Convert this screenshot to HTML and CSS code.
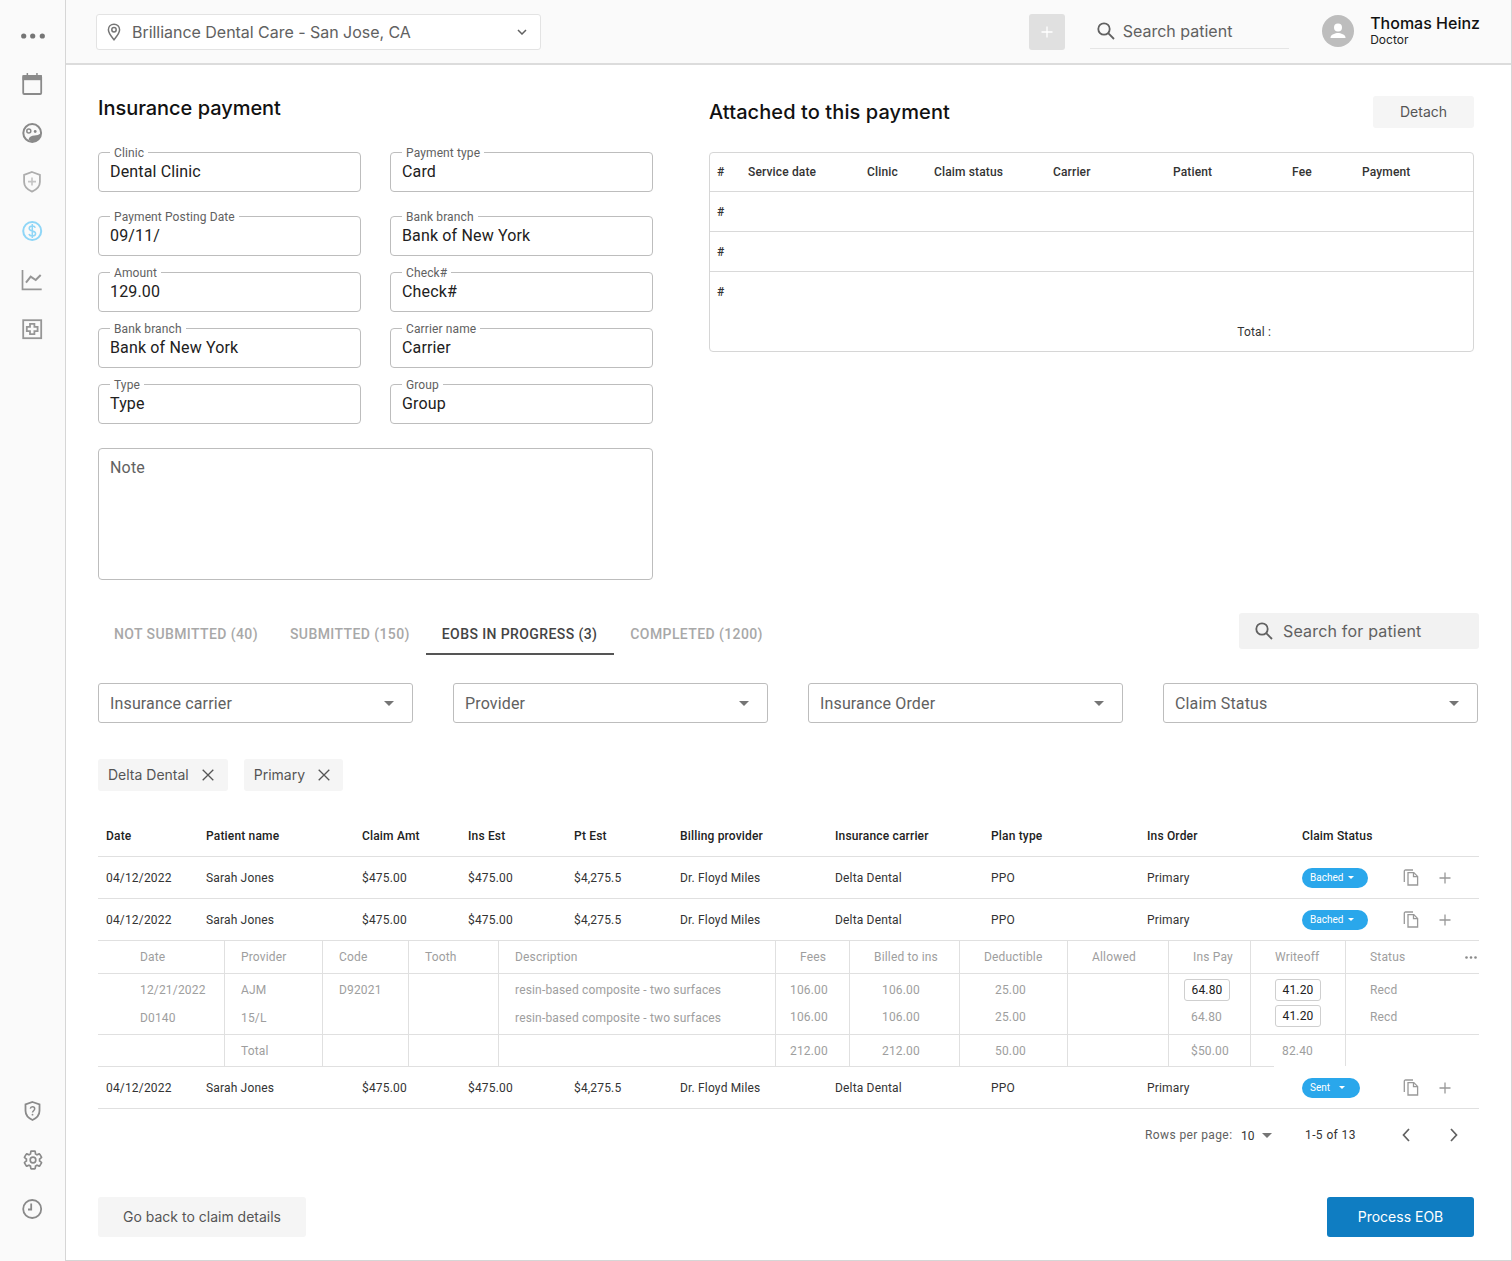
FILE: index.html
```html
<!DOCTYPE html>
<html lang="en">
<head>
<meta charset="utf-8">
<title>Insurance payment</title>
<link rel="stylesheet" href="styles.css">
</head>
<body>
<svg class="defs" width="0" height="0" aria-hidden="true">
  <symbol id="copy" viewBox="0 0 16 17"><path d="M10 1H2.500A1.200 1.200 0 0 0 1.300 2.200V13" fill="none" stroke="currentColor" stroke-width="1.300"/><path d="M5 3.600h5.800L14.600 7.400V16H5z" fill="none" stroke="currentColor" stroke-width="1.300"/><path d="M10.500 3.800V7.600h4" fill="none" stroke="currentColor" stroke-width="1.300"/></symbol>
  <symbol id="plus" viewBox="0 0 12 12"><path d="M6 .5v11M.5 6h11" stroke="currentColor" stroke-width="1.300" fill="none"/></symbol>
  <symbol id="caret" viewBox="0 0 10 5"><path d="M0 0h10L5 5z" fill="currentColor"/></symbol>
  <symbol id="search" viewBox="0 0 20 20"><circle cx="8" cy="8" r="5.700" fill="none" stroke="currentColor" stroke-width="1.800"/><path d="M12.200 12.200l5.800 5.800" stroke="currentColor" stroke-width="1.800" fill="none"/></symbol>
  <symbol id="close" viewBox="0 0 12 12"><path d="M.7.700l10.600 10.600M11.300.700L.7 11.300" stroke="currentColor" stroke-width="1.300" fill="none"/></symbol>
</svg>
<div class="app">
  <aside class="sidebar">
    <div class="side-group">
      <svg class="side-icon" viewBox="0 0 24 24"><circle cx="3.700" cy="13" r="2.600" fill="#757575"/><circle cx="12.700" cy="13" r="2.600" fill="#757575"/><circle cx="22.300" cy="13" r="2.600" fill="#757575"/></svg>
      <svg class="side-icon" viewBox="0 0 24 24"><rect x="3.200" y="4" width="18" height="18" rx="1" fill="none" stroke="#8a8a8a" stroke-width="1.800"/><path d="M2.500 3.200h19.500V8.200H2.500z" fill="#8a8a8a"/><path d="M6.600 1h1.500v3H6.600zM16.200 1h1.500v3h-1.500z" fill="#8a8a8a"/></svg>
      <svg class="side-icon" viewBox="0 0 24 24"><circle cx="12.200" cy="12" r="8.900" fill="none" stroke="#8a8a8a" stroke-width="2"/><circle cx="8.800" cy="10" r="2" fill="none" stroke="#8a8a8a" stroke-width="1.500"/><circle cx="15.200" cy="10.500" r="1.400" fill="#8a8a8a"/><path d="M8.500 18.500c1-3 3-4 6-4 2.500 0 4.500-.8 6-2 0 5-4 8-7 8-2 0-4-.7-5-2z" fill="#8a8a8a"/></svg>
      <svg class="side-icon" viewBox="0 0 24 24"><path d="M12 2l7.900 2.900v7c0 4.300-3.300 7.600-7.900 9.700-4.600-2.100-7.900-5.400-7.900-9.700v-7z" fill="none" stroke="#adadad" stroke-width="1.800"/><path d="M12 7.600v8M8 11.600h8" stroke="#c4c4c4" stroke-width="1.600" fill="none"/></svg>
      <svg class="side-icon" viewBox="0 0 24 24"><circle cx="12.200" cy="12" r="9" fill="none" stroke="#8fd6f7" stroke-width="2"/><path d="M15.300 8.800c-.4-1.200-1.600-1.800-3-1.800-1.700 0-3.100.9-3.100 2.400 0 3.400 6.400 1.800 6.400 5.100 0 1.600-1.500 2.500-3.300 2.500-1.600 0-2.900-.7-3.300-2M12.300 5v14" fill="none" stroke="#8fd6f7" stroke-width="1.500"/></svg>
      <svg class="side-icon" viewBox="0 0 24 24"><path d="M2.500 2v19.300h19.200" fill="none" stroke="#969696" stroke-width="1.700"/><path d="M6 14.700l4.700-6 5 3.300 5-5" fill="none" stroke="#969696" stroke-width="2"/></svg>
      <svg class="side-icon" viewBox="0 0 24 24"><rect x="3.200" y="3.200" width="18" height="18" fill="none" stroke="#969696" stroke-width="1.800"/><path d="M10 6.800h4.400v3h3.200v4.400h-3.200v3H10v-3H6.800V9.800H10z" fill="none" stroke="#969696" stroke-width="1.800"/></svg>
    </div>
    <div class="side-group">
      <svg class="side-icon" viewBox="0 0 24 24"><path d="M12.500 3l7 2.300v6.500c0 4.200-2.900 7.300-7 9.200-4.100-1.900-7-5-7-9.200V5.300z" fill="none" stroke="#8a8a8a" stroke-width="1.800"/><path d="M10.300 9.700c.2-1.200 1.100-1.900 2.200-1.900 1.200 0 2.200.8 2.200 2 0 1.900-2.200 1.900-2.200 3.700" fill="none" stroke="#8a8a8a" stroke-width="1.500"/><circle cx="12.500" cy="15.700" r=".9" fill="#8a8a8a"/></svg>
      <svg class="side-icon" viewBox="0 0 24 24"><g transform="translate(13 12) scale(.88) translate(-12 -12)"><path d="M19.430 12.980c.04-.32.07-.64.07-.98s-.03-.66-.07-.98l2.110-1.650c.19-.15.24-.42.12-.64l-2-3.460c-.12-.22-.39-.3-.61-.22l-2.490 1c-.52-.4-1.080-.73-1.690-.98l-.38-2.650C14.460 2.180 14.250 2 14 2h-4c-.25 0-.46.18-.49.42l-.38 2.650c-.61.25-1.170.59-1.690.98l-2.490-1c-.23-.09-.49 0-.61.22l-2 3.460c-.13.22-.07.49.12.64l2.110 1.650c-.04.32-.07.65-.07.98s.03.66.07.98l-2.110 1.650c-.19.15-.24.42-.12.64l2 3.460c.12.22.39.3.61.22l2.490-1c.52.4 1.080.73 1.690.98l.38 2.650c.03.24.24.42.49.42h4c.25 0 .46-.18.49-.42l.38-2.650c.61-.25 1.170-.59 1.690-.98l2.490 1c.23.09.49 0 .61-.22l2-3.460c.12-.22.07-.49-.12-.64z" fill="none" stroke="#8a8a8a" stroke-width="1.900"/><circle cx="12" cy="12" r="3.200" fill="none" stroke="#8a8a8a" stroke-width="1.900"/></g></svg>
      <svg class="side-icon" viewBox="0 0 24 24"><circle cx="12.200" cy="12" r="9" fill="none" stroke="#8a8a8a" stroke-width="1.800"/><path d="M11.200 6.500v6H8" fill="none" stroke="#8a8a8a" stroke-width="1.800"/></svg>
    </div>
  </aside>
  <div class="main">
    <header class="topbar">
      <div class="location">
        <svg class="loc-icon" viewBox="0 0 16 18"><path d="M8 1.200c-3.200 0-5.600 2.400-5.600 5.500 0 3.600 3.500 7.300 5.600 10 2.100-2.700 5.600-6.400 5.600-10 0-3.100-2.400-5.500-5.600-5.500z" fill="none" stroke="#757575" stroke-width="1.500"/><circle cx="8" cy="6.800" r="2.200" fill="none" stroke="#757575" stroke-width="1.500"/></svg>
        <span class="loc-text">Brilliance Dental Care - San Jose, CA</span>
        <svg class="loc-chevron" viewBox="0 0 10 6"><path d="M1 1l4 4 4-4" fill="none" stroke="#616161" stroke-width="1.500"/></svg>
      </div>
      <div class="add-btn"><svg class="add-plus"><use href="#plus"/></svg></div>
      <div class="top-search"><svg class="top-search-icon"><use href="#search"/></svg><span>Search patient</span></div>
      <div class="user">
        <svg class="avatar" viewBox="0 0 32 32"><circle cx="16" cy="16" r="16" fill="#bdbdbd"/><circle cx="16" cy="12.500" r="4" fill="#fff"/><path d="M8.500 22.500c0-3 5-4.500 7.500-4.500s7.500 1.500 7.500 4.500v.5h-15z" fill="#fff"/></svg>
        <div class="user-text"><div class="user-name">Thomas Heinz</div><div class="user-role">Doctor</div></div>
      </div>
    </header>
    <main class="content">
      <section class="top-section">
        <div>
          <h1 class="title-left">Insurance payment</h1>
          <div class="fields">
            <div class="field first-row"><span class="legend">Clinic</span><span class="value">Dental Clinic</span></div>
            <div class="field first-row"><span class="legend">Payment type</span><span class="value">Card</span></div>
            <div class="field"><span class="legend">Payment Posting Date</span><span class="value">09/11/</span></div>
            <div class="field"><span class="legend">Bank branch</span><span class="value">Bank of New York</span></div>
            <div class="field"><span class="legend">Amount</span><span class="value">129.00</span></div>
            <div class="field"><span class="legend">Check#</span><span class="value">Check#</span></div>
            <div class="field"><span class="legend">Bank branch</span><span class="value">Bank of New York</span></div>
            <div class="field"><span class="legend">Carrier name</span><span class="value">Carrier</span></div>
            <div class="field"><span class="legend">Type</span><span class="value">Type</span></div>
            <div class="field"><span class="legend">Group</span><span class="value">Group</span></div>
          </div>
          <div class="note">Note</div>
        </div>
        <div>
          <div class="attached-head">
            <h2 class="title-right">Attached to this payment</h2>
            <div class="detach">Detach</div>
          </div>
          <div class="attached">
            <div class="at-row at-header"><span>#</span><span>Service date</span><span>Clinic</span><span>Claim status</span><span>Carrier</span><span>Patient</span><span>Fee</span><span>Payment</span></div>
            <div class="at-row"><span>#</span></div>
            <div class="at-row"><span>#</span></div>
            <div class="at-row at-plain"><span>#</span></div>
            <div class="at-total">Total :</div>
          </div>
        </div>
      </section>

      <section class="wide">
        <div class="tabs-row">
          <div class="tabs">
            <div class="tab">NOT SUBMITTED (40)</div>
            <div class="tab">SUBMITTED (150)</div>
            <div class="tab tab-active">EOBS IN PROGRESS (3)</div>
            <div class="tab">COMPLETED (1200)</div>
          </div>
          <div class="tab-search"><svg class="tab-search-icon"><use href="#search"/></svg><span>Search for patient</span></div>
        </div>
        <div class="filters">
          <div class="filter"><span>Insurance carrier</span><svg class="filter-caret"><use href="#caret"/></svg></div>
          <div class="filter"><span>Provider</span><svg class="filter-caret"><use href="#caret"/></svg></div>
          <div class="filter"><span>Insurance Order</span><svg class="filter-caret"><use href="#caret"/></svg></div>
          <div class="filter"><span>Claim Status</span><svg class="filter-caret"><use href="#caret"/></svg></div>
        </div>
        <div class="chips">
          <div class="chip">Delta Dental<svg class="chip-x"><use href="#close"/></svg></div>
          <div class="chip">Primary<svg class="chip-x"><use href="#close"/></svg></div>
        </div>

        <div class="claims">
          <div class="cl-row cl-head"><span>Date</span><span>Patient name</span><span>Claim Amt</span><span>Ins Est</span><span>Pt Est</span><span>Billing provider</span><span>Insurance carrier</span><span>Plan type</span><span>Ins Order</span><span>Claim Status</span></div>
          <div class="cl-row"><span>04/12/2022</span><span>Sarah Jones</span><span>$475.00</span><span>$475.00</span><span>$4,275.5</span><span>Dr. Floyd Miles</span><span>Delta Dental</span><span>PPO</span><span>Primary</span><div class="cl-actions"><div class="status-slot"><span class="status">Bached<svg class="status-caret"><use href="#caret"/></svg></span></div><svg class="copy-icon"><use href="#copy"/></svg><svg class="plus-icon"><use href="#plus"/></svg></div></div>
          <div class="cl-row"><span>04/12/2022</span><span>Sarah Jones</span><span>$475.00</span><span>$475.00</span><span>$4,275.5</span><span>Dr. Floyd Miles</span><span>Delta Dental</span><span>PPO</span><span>Primary</span><div class="cl-actions"><div class="status-slot"><span class="status">Bached<svg class="status-caret"><use href="#caret"/></svg></span></div><svg class="copy-icon"><use href="#copy"/></svg><svg class="plus-icon"><use href="#plus"/></svg></div></div>

          <div class="sub">
            <div class="sub-row sub-head">
              <div class="sc c-date">Date</div><div class="sc">Provider</div><div class="sc">Code</div><div class="sc">Tooth</div><div class="sc">Description</div><div class="sc h25">Fees</div><div class="sc h25">Billed to ins</div><div class="sc h25">Deductible</div><div class="sc h25">Allowed</div><div class="sc h25">Ins Pay</div><div class="sc h25">Writeoff</div><div class="sc h25 c-status">Status<svg class="dots" viewBox="0 0 12 3"><circle cx="1.500" cy="1.500" r="1.300"/><circle cx="6" cy="1.500" r="1.300"/><circle cx="10.500" cy="1.500" r="1.300"/></svg></div>
            </div>
            <div class="sub-row sub-body">
              <div class="sc c-date"><div class="ln">12/21/2022</div><div class="ln">D0140</div></div>
              <div class="sc"><div class="ln">AJM</div><div class="ln">15/L</div></div>
              <div class="sc"><div class="ln">D92021</div></div>
              <div class="sc"></div>
              <div class="sc"><div class="ln">resin-based composite - two surfaces</div><div class="ln">resin-based composite - two surfaces</div></div>
              <div class="sc c-fees"><div class="ln tight">106.00</div><div class="ln tight">106.00</div></div>
              <div class="sc c-billed"><div class="ln tight">106.00</div><div class="ln tight">106.00</div></div>
              <div class="sc c-ded"><div class="ln tight">25.00</div><div class="ln tight">25.00</div></div>
              <div class="sc"></div>
              <div class="sc c-ins"><div class="ln tight"><span class="box">64.80</span></div><div class="ln tight ins-plain">64.80</div></div>
              <div class="sc h25"><div class="ln tight"><span class="box">41.20</span></div><div class="ln tight box-second"><span class="box">41.20</span></div></div>
              <div class="sc h25 c-last"><div class="ln tight">Recd</div><div class="ln tight">Recd</div></div>
            </div>
            <div class="sub-row sub-total">
              <div class="sc c-date"></div><div class="sc">Total</div><div class="sc"></div><div class="sc"></div><div class="sc"></div>
              <div class="sc c-fees">212.00</div><div class="sc c-billed">212.00</div><div class="sc c-ded">50.00</div><div class="sc"></div><div class="sc c-ins-total">$50.00</div><div class="sc c-wo-total">82.40</div><div class="sc c-last"></div>
            </div>
            <div class="sub-end"></div>
          </div>

          <div class="cl-row"><span>04/12/2022</span><span>Sarah Jones</span><span>$475.00</span><span>$475.00</span><span>$4,275.5</span><span>Dr. Floyd Miles</span><span>Delta Dental</span><span>PPO</span><span>Primary</span><div class="cl-actions"><div class="status-slot"><span class="status status-sent">Sent<svg class="status-caret"><use href="#caret"/></svg></span></div><svg class="copy-icon"><use href="#copy"/></svg><svg class="plus-icon"><use href="#plus"/></svg></div></div>
        </div>

        <div class="pager">
          <span class="pager-label">Rows per page:</span>
          <span class="pager-size">10</span>
          <svg class="pager-caret"><use href="#caret"/></svg>
          <span class="pager-range">1-5 of 13</span>
          <svg class="pager-prev" viewBox="0 0 8 14"><path d="M7 1L1.500 7 7 13" fill="none" stroke="#616161" stroke-width="1.700"/></svg>
          <svg class="pager-next" viewBox="0 0 8 14"><path d="M1 1l5.500 6L1 13" fill="none" stroke="#616161" stroke-width="1.700"/></svg>
        </div>
      </section>

      <footer class="actions">
        <div class="btn-back">Go back to claim details</div>
        <div class="btn-primary">Process EOB</div>
      </footer>
    </main>
  </div>
</div>
</body>
</html>
```

FILE: styles.css
```css
* { box-sizing: border-box; }
html, body { margin: 0; padding: 0; }
body { font-family: "Inter", "Liberation Sans", sans-serif; color: #212121; background: #fff; height: 1261px; overflow: hidden; }
h1, h2 { margin: 0; font-weight: 500; color: #111; }
.defs { position: absolute; }
.app { display: flex; height: 1261px; }

.sidebar { width: 66px; flex: none; background: #fafafa; border-right: 1px solid #d6d6d6; display: flex; flex-direction: column; justify-content: space-between; align-items: center; padding: 23px 0 40px; }
.side-group { display: flex; flex-direction: column; gap: 25px; margin-left: -1px; }
.side-icon { width: 24px; height: 24px; display: block; overflow: visible; }

.main { flex: 1; min-width: 0; display: flex; flex-direction: column; border-right: 1px solid #d6d6d6; border-bottom: 1px solid #d6d6d6; }

.topbar { height: 65px; flex: none; background: #fafafa; border-bottom: 2px solid #dcdcdc; display: flex; align-items: flex-start; padding: 14px 31px 0 30px; }
.location { width: 446px; height: 36px; background: #fff; border: 1px solid #e3e3e3; border-radius: 3px; display: flex; align-items: center; padding: 0 13px 0 9px; }
.loc-icon { width: 16px; height: 18px; margin-right: 10px; }
.loc-text { flex: 1; font-size: 16px; color: #616161; letter-spacing: -.03px; margin-top: -1px; }
.loc-chevron { width: 10px; height: 6px; }
.add-btn { width: 36px; height: 36px; margin-left: 488px; background: #e0e0e0; border-radius: 3px; display: flex; align-items: center; justify-content: center; color: #fff; }
.add-plus { width: 12px; height: 12px; }
.top-search { width: 200px; height: 35px; margin-left: 25px; border-bottom: 1px solid #e5e5e5; display: flex; align-items: center; font-size: 16px; color: #616161; padding-left: 6px; }
.top-search-icon { width: 20px; height: 20px; margin-right: 7px; color: #616161; }
.user { margin-left: 33px; display: flex; align-items: center; }
.avatar { width: 32px; height: 32px; margin-right: 16px; }
.user-name { font-size: 16px; font-weight: 500; line-height: 19px; color: #111; white-space: nowrap; }
.user-role { font-size: 12px; line-height: 15px; color: #212121; margin-top: -1px; }

.content { flex: 1; padding: 0 32px; display: flex; flex-direction: column; }
.top-section { display: grid; grid-template-columns: 555px 765px; column-gap: 56px; padding-top: 30px; }
.title-left { font-size: 20px; line-height: 26px; margin-bottom: 31px; letter-spacing: -.03px; }
.fields { display: grid; grid-template-columns: 263px 263px; column-gap: 29px; row-gap: 16px; font-family: "Roboto", sans-serif; }
.field { position: relative; height: 40px; border: 1px solid #bdbdbd; border-radius: 4px; padding: 0 11px; display: flex; align-items: center; }
.first-row { margin-bottom: 8px; }
.legend { position: absolute; top: -7px; left: 11px; background: #fff; padding: 0 4px; font-size: 12px; line-height: 14px; color: #616161; letter-spacing: .12px; }
.value { font-size: 16px; line-height: 20px; color: #212121; letter-spacing: .15px; }
.note { height: 132px; margin-top: 24px; border: 1px solid #bdbdbd; border-radius: 4px; padding: 9px 11px; font-family: "Roboto", sans-serif; font-size: 16px; line-height: 20px; color: #616161; letter-spacing: .2px; }

.attached-head { display: flex; justify-content: space-between; align-items: center; height: 32px; margin: 1px 0 24px; }
.title-right { font-size: 20px; line-height: 26px; letter-spacing: .09px; }
.detach { width: 101px; height: 32px; padding-bottom: 1px; background: #f5f5f5; border-radius: 3px; font-size: 14px; color: #555; display: flex; align-items: center; justify-content: center; }
.attached { height: 200px; border: 1px solid #d6d6d6; border-radius: 4px; font-family: "Roboto", sans-serif; }
.at-row { height: 40px; display: grid; grid-template-columns: 31px 119px 67px 119px 120px 119px 70px 1fr; align-items: center; padding-left: 7px; border-bottom: 1px solid #d9d9d9; font-size: 12px; font-weight: 500; color: #333; letter-spacing: .15px; }
.at-header { height: 39px; }
.at-plain { border-bottom: 0; }
.at-total { height: 40px; padding-right: 202px; text-align: right; font-size: 12px; line-height: 40px; color: #333; letter-spacing: .15px; }

.wide { margin-top: 34px; font-family: "Roboto", sans-serif; }
.tabs-row { display: flex; justify-content: space-between; align-items: flex-start; height: 40px; }
.tabs { display: flex; }
.tab { height: 41px; padding: 0 16px; font-size: 14px; font-weight: 500; line-height: 40px; color: #a8a8a8; letter-spacing: .4px; white-space: nowrap; }
.tab-active { color: #444; border-bottom: 2px solid #555; padding-right: 17px; }
.tab-search { width: 240px; height: 36px; margin-top: -1px; background: #f2f2f2; border-radius: 3px; display: flex; align-items: center; padding-left: 15px; font-family: "Inter", sans-serif; font-size: 16px; color: #616161; letter-spacing: .18px; }
.tab-search-icon { width: 20px; height: 20px; margin-right: 9px; color: #616161; }
.filters { display: flex; gap: 40px; margin-top: 29px; }
.filter { width: 315px; height: 40px; border: 1px solid #bdbdbd; border-radius: 3px; padding: 0 18px 0 11px; display: flex; justify-content: space-between; align-items: center; font-size: 16px; color: #616161; letter-spacing: .15px; }
.filter-caret { width: 10px; height: 5px; color: #757575; }
.chips { display: flex; gap: 16px; margin-top: 36px; font-family: "Inter", sans-serif; }
.chip { height: 32px; padding: 0 13px 1px 10px; background: #f5f5f5; border-radius: 3px; display: flex; align-items: center; font-size: 14px; color: #555; }
.chip:first-child { padding-right: 14px; }
.chip-x { width: 12px; height: 12px; margin-left: 13px; color: #555; }

.claims { margin-top: 25px; }
.cl-row { height: 42px; display: grid; grid-template-columns: 100px 156px 106px 106px 106px 155px 156px 156px 155px 168px; align-items: center; padding-left: 8px; border-bottom: 1px solid #e0e0e0; font-size: 12px; color: #333; letter-spacing: .17px; }
.cl-head { height: 41px; font-weight: 500; color: #222; }
.cl-actions { display: flex; align-items: center; letter-spacing: 0; }
.status-slot { width: 101px; flex: none; }
.status { display: inline-flex; align-items: center; height: 20px; width: 66px; padding-left: 8px; background: #2aa7eb; border-radius: 10px; font-size: 10px; color: #fff; }
.status-sent { width: 58px; }
.status-sent .status-caret { margin-left: 9px; }
.status-caret { width: 6px; height: 3px; margin-left: 5px; color: #fff; }
.copy-icon { width: 16px; height: 17px; color: #999; flex: none; }
.plus-icon { width: 12px; height: 12px; margin-left: 20px; color: #999; flex: none; }

.sub { font-size: 12px; color: #9e9e9e; letter-spacing: .17px; }
.sub-row { display: grid; grid-template-columns: 127px 98px 86px 90px 277px 74px 110px 108px 101px 82px 95px 132px; }
.sc { border-right: 1px solid #e0e0e0; padding-left: 16px; }
.c-last, .c-status { border-right: 0; }
.sub-head { height: 33px; border-bottom: 1px solid #e0e0e0; }
.sub-head .sc { display: flex; align-items: center; }
.sc.h25 { padding-left: 24px; }
.sc.c-date { padding-left: 42px; }
.c-status { justify-content: space-between; padding-right: 1px; }
.dots { width: 12px; height: 3px; fill: #8a8a8a; }
.sub-body { height: 61px; border-bottom: 1px solid #e0e0e0; }
.sub-body .sc { padding-top: 2px; }
.ln { height: 28px; display: flex; align-items: center; white-space: nowrap; }
.tight { height: 27px; }
.sc.c-fees { padding-left: 14px; }
.sc.c-billed { padding-left: 32px; }
.sc.c-ded { padding-left: 35px; }
.sc.c-ins { padding-left: 15px; }
.ins-plain { padding-left: 7px; }
.box { width: 46px; height: 22px; border: 1px solid #cfcfcf; border-radius: 3px; display: flex; align-items: center; justify-content: center; color: #212121; background: #fff; }
.box-second { margin-top: -1px; }
.sub-total { height: 31px; }
.sub-total .sc { display: flex; align-items: center; }
.sc.c-ins-total { padding-left: 22px; }
.sc.c-wo-total { padding-left: 31px; }
.sub-end { width: 1176px; height: 1px; background: #e0e0e0; }

.pager { height: 40px; margin-top: 6px; display: flex; align-items: center; font-size: 12px; color: #616161; padding-left: 1047px; }
.pager-label { width: 96px; flex: none; letter-spacing: .4px; white-space: nowrap; }
.pager-size { width: 21px; flex: none; color: #333; margin-top: 2px; }
.pager-caret { width: 10px; height: 5px; color: #757575; flex: none; }
.pager-range { margin-left: 33px; width: 97px; flex: none; color: #333; letter-spacing: .4px; }
.pager-prev, .pager-next { width: 8px; height: 14px; flex: none; }
.pager-next { margin-left: 40px; }

.actions { display: flex; justify-content: space-between; margin-top: 42px; margin-right: 5px; }
.btn-back { width: 208px; height: 40px; padding-bottom: 1px; background: #f5f5f5; border-radius: 3px; display: flex; align-items: center; justify-content: center; font-size: 14px; color: #555; }
.btn-primary { width: 147px; height: 40px; padding-bottom: 1px; background: #0f7dc2; border-radius: 3px; display: flex; align-items: center; justify-content: center; font-size: 14px; color: #fff; }
```
